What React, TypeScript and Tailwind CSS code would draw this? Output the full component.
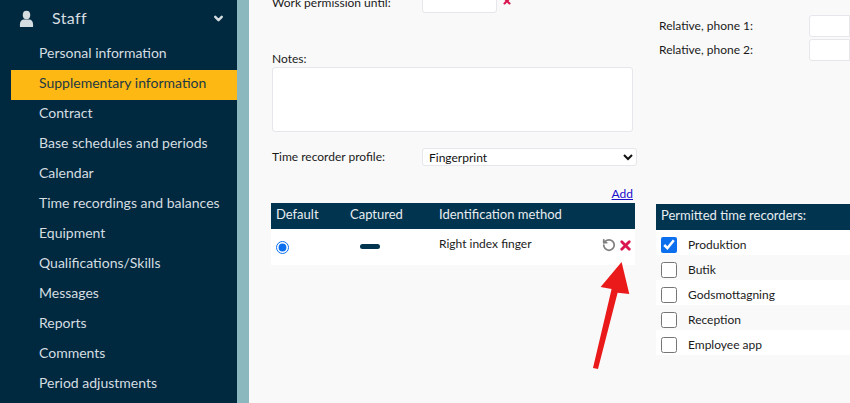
import { ChevronDown, RotateCcw, X } from "lucide-react";

const menuItems = [
  "Personal information",
  "Supplementary information",
  "Contract",
  "Base schedules and periods",
  "Calendar",
  "Time recordings and balances",
  "Equipment",
  "Qualifications/Skills",
  "Messages",
  "Reports",
  "Comments",
  "Period adjustments",
];

const recorders = ["Produktion", "Butik", "Godsmottagning", "Reception", "Employee app"];

const Sidebar = () => (
  <aside className="w-[237px] shrink-0 bg-[#00293f] text-[#d5dde1]">
    <div className="flex h-[36px] items-center pl-[19px] pr-[12px]">
      <svg viewBox="0 0 16 16" className="h-[17px] w-[15px] fill-[#d5dde1]" preserveAspectRatio="none">
        <circle cx="8" cy="4.6" r="4" />
        <path d="M1 16v-2.6C1 10.6 3 9 5.2 9h5.6C13 9 15 10.6 15 13.4V16z" />
      </svg>
      <span className="ml-[18px] text-[16px] tracking-[0.4px]">Staff</span>
      <ChevronDown className="ml-auto h-[13px] w-[13px] text-[#d5dde1]" strokeWidth={4.5} />
    </div>
    <ul className="mt-[4px] pl-[11px] text-[14px]">
      {menuItems.map((item) => (
        <li
          key={item}
          className={
            item === "Supplementary information"
              ? "flex h-[30px] items-center bg-[#fdb813] pb-[6px] pl-[28px] text-[#1d3a44]"
              : "flex h-[30px] items-center pb-[6px] pl-[28px]"
          }
        >
          {item}
        </li>
      ))}
    </ul>
  </aside>
);

const LeftColumn = () => (
  <div className="w-[365px] shrink-0">
    <div className="flex h-[20px] items-center">
      <span className="w-[150px]">Work permission until:</span>
      <span className="h-[20px] w-[75px] rounded-[3px] border border-[#e6e6ec] bg-white" />
      <X className="ml-[5px] -mt-[5px] h-[10px] w-[10px] text-[#d9164f]" strokeWidth={5} />
    </div>
    <div className="mt-[38px] leading-[16px]">Notes:</div>
    <div className="h-[65px] w-[361px] rounded-[3px] border border-[#e6e6ec] bg-white" />
    <div className="mt-[16px] flex h-[18px] items-center">
      <span className="w-[150px]">Time recorder profile:</span>
      <select
        defaultValue="Fingerprint"
        className="h-[18px] w-[215px] rounded-[3px] border border-[#e6e6ec] bg-white pl-[2px] text-[12px] text-[#111]"
      >
        <option>Fingerprint</option>
      </select>
    </div>
    <div className="mt-[19px] h-[18px] w-[361px] text-right leading-[18px] text-[#1a0dcc] underline">
      Add
    </div>
    <table className="-ml-[1px] w-[364px] table-fixed border-collapse">
      <thead>
        <tr className="h-[26px] bg-[#00344f] text-left text-[13px] text-[#e8edf0]">
          <th className="w-[79px] pb-[2px] pl-[5px] font-normal">Default</th>
          <th className="w-[89px] pb-[2px] font-normal">Captured</th>
          <th className="pb-[2px] font-normal">Identification method</th>
        </tr>
      </thead>
      <tbody>
        <tr className="h-[36px] bg-white">
          <td className="pl-[5px] align-middle">
            <input type="radio" defaultChecked className="mt-[1px] block h-[13px] w-[13px] accent-[#0b6fee]" />
          </td>
          <td className="align-middle">
            <div className="mb-[2px] ml-[10px] h-[5px] w-[20px] rounded-full bg-[#00344f]" />
          </td>
          <td className="align-middle">
            <div className="flex items-center justify-between pr-[2px]">
              <span className="mb-[7px]">Right index finger</span>
              <span className="mb-[4px] flex items-center gap-[2px]">
                <RotateCcw className="h-[14px] w-[14px] text-[#808080]" strokeWidth={3} />
                <X className="h-[15px] w-[15px] text-[#d9164f]" strokeWidth={4.5} />
              </span>
            </div>
          </td>
        </tr>
      </tbody>
    </table>
  </div>
);

const RightColumn = () => (
  <div className="ml-[19px] flex-1">
    <div className="mt-[21px] pl-[3px]">
      <div className="flex h-[24px] items-center">
        <span className="w-[150px]">Relative, phone 1:</span>
        <span className="h-[22px] flex-1 rounded-l-[3px] border border-[#e6e6ec] bg-white" />
      </div>
      <div className="flex h-[24px] items-center">
        <span className="w-[150px]">Relative, phone 2:</span>
        <span className="h-[22px] flex-1 rounded-l-[3px] border border-[#e6e6ec] bg-white" />
      </div>
    </div>
    <div className="mt-[142px] flex h-[26px] items-center bg-[#00344f] pb-[2px] pl-[5px] text-[13px] text-[#e8edf0]">
      Permitted time recorders:
    </div>
    {recorders.map((name, i) => (
      <label
        key={name}
        className={
          i % 2 === 0
            ? "flex h-[25px] items-center bg-white pl-[5px] pt-[4px]"
            : "flex h-[25px] items-center bg-[#f9f9f9] pl-[5px] pt-[4px]"
        }
      >
        <input
          type="checkbox"
          defaultChecked={i === 0}
          className="h-[16px] w-[16px] accent-[#0b6fee]"
        />
        <span className="ml-[11px]">{name}</span>
      </label>
    ))}
  </div>
);

export default function App() {
  return (
    <div className="relative flex h-[403px] w-[850px] overflow-hidden font-['Lato',sans-serif] text-[12px] text-[#1b1b1b]">
      <Sidebar />
      <div className="w-[12px] shrink-0 bg-[#8ab8be]" />
      <main className="flex flex-1 bg-[#f9f9f9] pl-[23px] -mt-[7px]">
        <LeftColumn />
        <RightColumn />
      </main>
      <svg className="pointer-events-none absolute left-[590px] top-[260px] h-[112px] w-[45px]" viewBox="0 0 45 112">
        <path d="M31.6 2 L39.3 34 L27.6 32.7 L8 109 L3 108 L21.6 29 L10.6 27 Z" fill="#ea1a1a" />
      </svg>
    </div>
  );
}
